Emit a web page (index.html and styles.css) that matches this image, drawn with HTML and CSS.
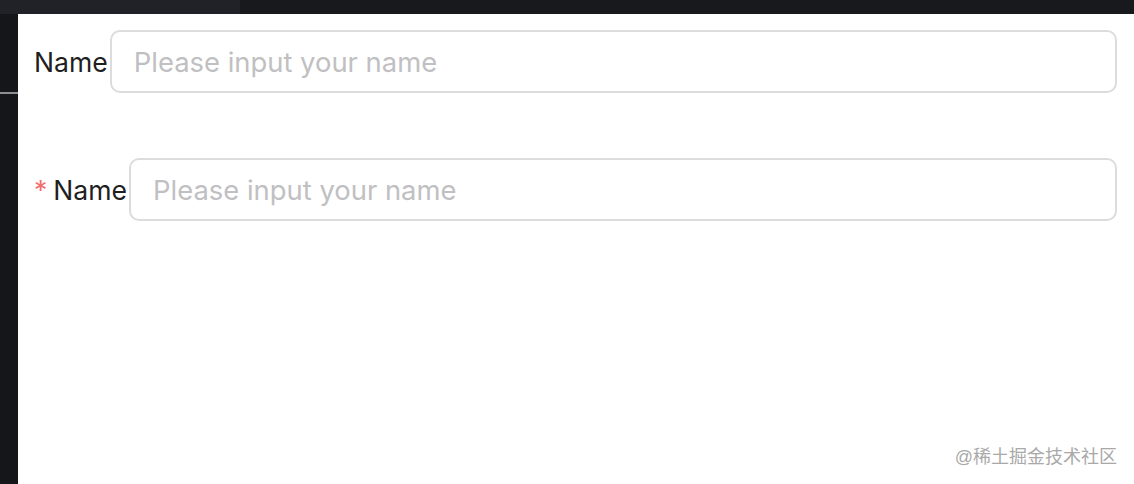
FILE: index.html
```html
<!DOCTYPE html>
<html lang="en">
<head>
    <meta charset="UTF-8">
    <title>Form</title>
    <link rel="stylesheet" href="styles.css">
</head>
<body>

    <!-- Top bar -->
    <div class="topbar">
        <div class="topbar-left"></div>
        <div class="topbar-right"></div>
    </div>

    <div class="main">
        <div class="sidebar">
            <div class="sidebar-line"></div>
        </div>

        <div class="panel">
            <form class="form">
                <div class="form-item">
                    <label class="form-label">Name</label>
                    <input class="form-input" type="text" placeholder="Please input your name">
                </div>
                <div class="form-item">
                    <label class="form-label required">Name</label>
                    <input class="form-input" type="text" placeholder="Please input your name">
                </div>
            </form>
            <div class="watermark">@稀土掘金技术社区</div>
        </div>
    </div>

</body>
</html>
```

FILE: styles.css
```css
/* General Styling */
html, body {
    height: 100%;
}

body {
    margin: 0;
    padding: 0;
    display: flex;
    flex-direction: column;
    background-color: #131519;
    font-family: 'Inter', 'Liberation Sans', sans-serif;
    overflow: hidden;
}

/* Top bar */
.topbar {
    display: flex;
    height: 14px;
    flex-shrink: 0;
}

.topbar-left {
    width: 240px;
    background: #202227;
}

.topbar-right {
    flex: 1;
    background: #18191d;
}

/* Main area */
.main {
    flex: 1;
    display: flex;
}

.sidebar {
    width: 18px;
    background: #14161a;
    padding-top: 78px;
}

.sidebar-line {
    height: 2px;
    background: #8b8e92;
}

.panel {
    flex: 1;
    position: relative;
    background: #ffffff;
    padding: 16px 17px 0 16px;
}

/* Form */
.form {
    display: flex;
    flex-direction: column;
    gap: 65px;
}

.form-item {
    display: flex;
    align-items: center;
}

.form-label {
    font-size: 26.6px;
    color: #1f1f1f;
    white-space: nowrap;
}

.form-label.required::before {
    content: "*";
    color: #f56c6c;
    margin-right: 6px;
}

.form-input {
    flex: 1;
    height: 63px;
    box-sizing: border-box;
    margin-left: 2px;
    padding: 0 22px;
    border: 2px solid #dcdcde;
    border-radius: 10px;
    font-family: inherit;
    font-size: 27.4px;
    color: #333;
    outline: none;
}

.form-input::placeholder {
    color: #c0c0c2;
}

/* Watermark */
.watermark {
    position: absolute;
    right: 17px;
    bottom: 16px;
    font-family: 'Liberation Sans', 'Noto Sans CJK SC', sans-serif;
    font-size: 18px;
    color: #a9a9a9;
    text-shadow: 0 0 1px #ffffff;
}
```
